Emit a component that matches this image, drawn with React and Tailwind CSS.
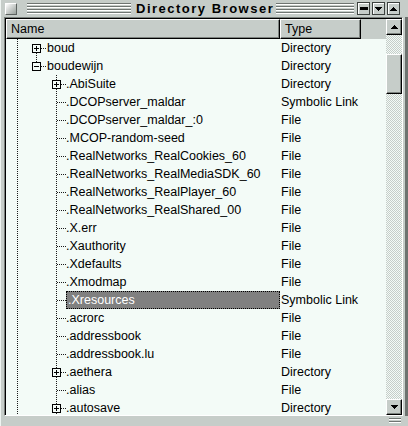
import React from 'react';

const rows = [
  { name: 'boud', type: 'Directory', level: 1, box: 'plus', first: true },
  { name: 'boudewijn', type: 'Directory', level: 1, box: 'minus' },
  { name: '.AbiSuite', type: 'Directory', level: 2, box: 'plus' },
  { name: '.DCOPserver_maldar', type: 'Symbolic Link', level: 2 },
  { name: '.DCOPserver_maldar_:0', type: 'File', level: 2 },
  { name: '.MCOP-random-seed', type: 'File', level: 2 },
  { name: '.RealNetworks_RealCookies_60', type: 'File', level: 2 },
  { name: '.RealNetworks_RealMediaSDK_60', type: 'File', level: 2 },
  { name: '.RealNetworks_RealPlayer_60', type: 'File', level: 2 },
  { name: '.RealNetworks_RealShared_00', type: 'File', level: 2 },
  { name: '.X.err', type: 'File', level: 2 },
  { name: '.Xauthority', type: 'File', level: 2 },
  { name: '.Xdefaults', type: 'File', level: 2 },
  { name: '.Xmodmap', type: 'File', level: 2 },
  { name: '.Xresources', type: 'Symbolic Link', level: 2, selected: true },
  { name: '.acrorc', type: 'File', level: 2 },
  { name: '.addressbook', type: 'File', level: 2 },
  { name: '.addressbook.lu', type: 'File', level: 2 },
  { name: '.aethera', type: 'Directory', level: 2, box: 'plus' },
  { name: '.alias', type: 'File', level: 2 },
  { name: '.autosave', type: 'Directory', level: 2, box: 'plus' },
];

const Dot = (props) => (
  <line {...props} stroke="#1a1a1a" strokeDasharray="1 1" />
);

const Box = ({ x, kind }) => (
  <g stroke="#000" fill="none">
    <rect x={x + 0.5} y={5.5} width={8} height={8} />
    <line x1={x + 2} y1={9.5} x2={x + 7} y2={9.5} />
    {kind === 'plus' && <line x1={x + 4.5} y1={7} x2={x + 4.5} y2={12} />}
  </g>
);

// tree guides, drawn from the left edge of the Name column
const Tree = ({ row }) => {
  const w = row.level === 1 ? 41 : 60;
  return (
    <svg width={w} height="18" shapeRendering="crispEdges" className="shrink-0">
      <Dot x1={11.5} y1={0} x2={11.5} y2={18} />
      {row.level === 1 && (
        <>
          {row.first ? (
            <Dot x1={30.5} y1={14} x2={30.5} y2={18} />
          ) : (
            <Dot x1={30.5} y1={0} x2={30.5} y2={5} />
          )}
          <Dot x1={35} y1={9.5} x2={41} y2={9.5} />
          <Box x={26} kind={row.box} />
        </>
      )}
      {row.level === 2 &&
        (row.box ? (
          <>
            <Dot x1={50.5} y1={0} x2={50.5} y2={5} />
            <Dot x1={50.5} y1={14} x2={50.5} y2={18} />
            <Dot x1={55} y1={9.5} x2={60} y2={9.5} />
            <Box x={46} kind={row.box} />
          </>
        ) : (
          <>
            <Dot x1={50.5} y1={0} x2={50.5} y2={18} />
            <Dot x1={51} y1={9.5} x2={60} y2={9.5} />
          </>
        ))}
    </svg>
  );
};

const Groove = ({ className }) => (
  <div className={`flex flex-col gap-[1px] ${className}`}>
    <div className="h-[2px] border-t border-[#6f7572] border-b border-b-white" />
    <div className="h-[2px] border-t border-[#6f7572] border-b border-b-white" />
    <div className="h-[2px] border-t border-[#6f7572] border-b border-b-white" />
    <div className="h-[2px] border-t border-[#6f7572] border-b border-b-white" />
  </div>
);

const TitleButton = ({ children }) => (
  <div className="w-[13px] h-[13px] border border-[#3c413e] bg-[#c6cdc9] shadow-[inset_1px_1px_0_#ffffff] flex items-center justify-center">
    {children}
  </div>
);

const Arrow = ({ up }) => (
  <svg width="7" height="4" shapeRendering="crispEdges">
    <path d={up ? 'M0 4h7L3.5 0z' : 'M0 0h7L3.5 4z'} fill="#000" />
  </svg>
);

const raised =
  'border border-t-white border-l-white border-r-black border-b-black shadow-[inset_-1px_-1px_0_#7d837f] bg-[#c6cdc9]';

const checker =
  'bg-[image:repeating-conic-gradient(#c6cdc9_0%_25%,#f3fbf7_0%_50%)] bg-[length:2px_2px]';

export default function App() {
  return (
    <div className="w-[408px] h-[426px] bg-[#c6cdc9] border-l border-[#eef4f1] flex flex-col overflow-hidden font-['Liberation_Sans',Arial,sans-serif] text-black select-none">
      {/* title bar */}
      <div className="h-[17px] flex items-center pl-[4px] pr-[8px] shrink-0">
        <div className="w-[12px] h-[12px] border border-t-white border-l-white border-r-[#5c625f] border-b-[#5c625f] bg-linear-to-br from-white to-[#98a09b]" />
        <Groove className="ml-[10px] w-[104px]" />
        <div className="ml-[5px] text-[13px] font-bold tracking-[1.5px] leading-[17px] whitespace-nowrap">
          Directory Browser
        </div>
        <Groove className="ml-[2px] flex-1" />
        <div className="ml-[3px] flex gap-[2px]">
          <TitleButton>
            <div className="w-[8px] h-[3px] bg-black" />
          </TitleButton>
          <TitleButton>
            <Arrow />
          </TitleButton>
          <TitleButton>
            <Arrow up />
          </TitleButton>
        </div>
      </div>

      {/* body */}
      <div className="flex h-[399px] shrink-0 pl-[3px]">
        <div className="w-[399px] border-t border-l border-[#7a807c] border-r border-b border-r-white border-b-white">
          <div className="w-[397px] h-[397px] border-t border-l border-black flex">
            <div className="w-[380px] h-[396px] flex flex-col">
              <div className="h-[20px] flex shrink-0 text-[12.5px]">
                <div className="w-[274px] border-t border-l border-white border-r border-b border-r-black border-b-black shadow-[inset_-1px_-1px_0_#7d837f] pl-[4px] flex items-center">
                  Name
                </div>
                <div className="w-[81px] border-t border-l border-white border-r border-b border-r-black border-b-black shadow-[inset_-1px_-1px_0_#7d837f] pl-[4px] flex items-center">
                  Type
                </div>
                <div className="flex-1" />
              </div>
              <div className="flex-1 bg-[#f3fbf7] overflow-hidden text-[12.5px]">
                {rows.map((row) => (
                  <div key={row.name} className="h-[18px] flex">
                    <div className="w-[274px] flex h-full">
                      <Tree row={row} />
                      {row.selected ? (
                        <div className="flex-1 h-full bg-[#808080] border border-dotted border-black text-white pl-[1px] leading-[16px] whitespace-nowrap">
                          {row.name}
                        </div>
                      ) : (
                        <div className="leading-[18px] whitespace-nowrap">{row.name}</div>
                      )}
                    </div>
                    <div className="pl-[1px] leading-[18px] whitespace-nowrap">{row.type}</div>
                  </div>
                ))}
              </div>
            </div>

            {/* scrollbar */}
            <div className={`w-[16px] h-[396px] flex flex-col ${checker}`}>
              <div className={`h-[16px] flex items-center justify-center ${raised}`}>
                <Arrow up />
              </div>
              <div className="h-[19px]" />
              <div className={`h-[40px] ${raised}`} />
              <div className="flex-1" />
              <div className={`h-[16px] flex items-center justify-center ${raised}`}>
                <Arrow />
              </div>
            </div>
          </div>
        </div>
        <div className="w-[2px]" />
        <div className="w-[3px] bg-[#6d7370]" />
      </div>

      {/* bottom edge with resize grip */}
      <div className="h-[10px] flex justify-end items-start pt-[2px] pr-[7px] shrink-0">
        <div className="w-[12px] flex flex-col gap-[1px]">
          <div className="h-[2px] border-t border-[#6f7572] border-b border-b-white" />
          <div className="h-[2px] border-t border-[#6f7572] border-b border-b-white" />
        </div>
      </div>
    </div>
  );
}
